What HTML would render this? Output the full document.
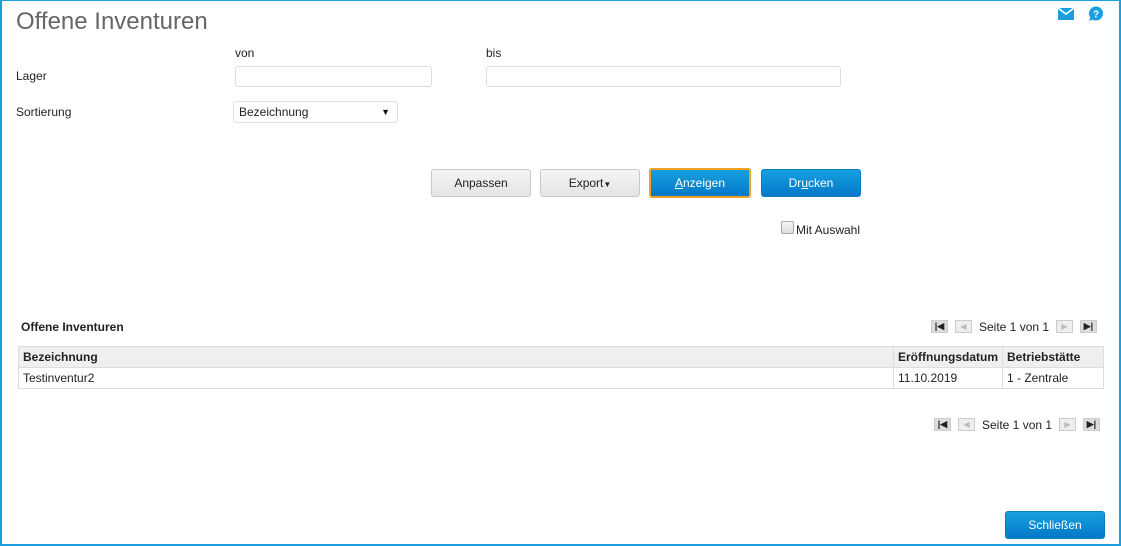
<!DOCTYPE html>
<html><head><meta charset="utf-8"><style>
*{box-sizing:border-box;margin:0;padding:0}
body{width:1121px;height:546px;background:#fff;font-family:"Liberation Sans",Arial,sans-serif;font-size:12px;color:#222;position:relative;overflow:hidden}
.frame{position:absolute;left:0;top:0;width:1121px;height:546px;border:2px solid #1a9ee0;border-top-width:1px;border-left-width:2px}
.a{position:absolute;white-space:nowrap}
.inp{position:absolute;border:1px solid #ddd;border-radius:3px;background:#fff;height:21px}
.btn{position:absolute;height:28px;border-radius:3px;text-align:center;line-height:26px;font-size:12px}
.g{background:linear-gradient(#f4f4f4,#e4e4e4);border:1px solid #c8c8c8;color:#222}
.b{background:linear-gradient(#16a0e0,#0478c8);border:1px solid #0a7cc8;color:#fff}
.pg{position:absolute;width:17px;height:13px;background:#ddd;border:1px solid #ccc}
table{position:absolute;left:18px;top:346px;width:1086px;border-collapse:collapse}
td,th{border:1px solid #ddd;height:21px;padding:0 4px;text-align:left;font-size:12px}
th{background:#efefef;font-weight:bold;color:#222}
</style></head><body>
<div class="frame"></div>
<div class="a" style="left:16px;top:8px;font-size:24px;color:#666">Offene Inventuren</div>
<svg class="a" style="left:1058px;top:8px" width="16" height="12" viewBox="0 0 16 12"><rect width="16" height="12" fill="#1a9ee0"/><path d="M0 0 L8 6 L16 0" stroke="#fff" stroke-width="1.6" fill="none"/></svg>
<svg class="a" style="left:1087px;top:6px" width="17" height="16" viewBox="0 0 17 16"><circle cx="9" cy="7.5" r="7" fill="#1a9ee0"/><path d="M2 15 L4 10 L7 13 Z" fill="#1a9ee0"/><text x="9" y="11.5" font-size="10" font-weight="bold" fill="#fff" text-anchor="middle" font-family="Liberation Sans">?</text></svg>
<div class="a" style="left:235px;top:46px">von</div>
<div class="a" style="left:486px;top:46px">bis</div>
<div class="a" style="left:16px;top:69px">Lager</div>
<div class="inp" style="left:235px;top:66px;width:197px"></div>
<div class="inp" style="left:486px;top:66px;width:355px"></div>
<div class="a" style="left:16px;top:105px">Sortierung</div>
<div class="inp" style="left:233px;top:101px;width:165px;height:22px"><span class="a" style="left:5px;top:3px">Bezeichnung</span><span class="a" style="right:7px;top:5px;font-size:9px;color:#111">▼</span></div>
<div class="btn g" style="left:431px;top:169px;width:100px">Anpassen</div>
<div class="btn g" style="left:540px;top:169px;width:100px">Export<span style="font-size:8px">▼</span></div>
<div class="btn b" style="left:649px;top:168px;width:102px;height:30px;border:2px solid #f0a020"><u>A</u>nzeigen</div>
<div class="btn b" style="left:761px;top:169px;width:100px">Dr<u>u</u>cken</div>
<div class="a" style="left:781px;top:221px;width:13px;height:13px;border:1px solid #aaa;border-radius:2px;background:linear-gradient(#f4f4f4,#ddd)"></div>
<div class="a" style="left:796px;top:223px">Mit Auswahl</div>
<div class="a" style="left:21px;top:320px;font-weight:bold">Offene Inventuren</div>
<div class="pg" style="left:931px;top:320px;font-size:9px;line-height:11px;text-align:center;font-weight:bold">|◀</div>
<div class="pg" style="left:955px;top:320px;background:#eee;color:#bbb;font-size:8px;line-height:11px;text-align:center">◀</div>
<div class="a" style="left:979px;top:320px">Seite 1 von 1</div>
<div class="pg" style="left:1056px;top:320px;background:#eee;color:#bbb;font-size:8px;line-height:11px;text-align:center">▶</div>
<div class="pg" style="left:1080px;top:320px;font-size:9px;line-height:11px;text-align:center;font-weight:bold">▶|</div>
<table><tr><th>Bezeichnung</th><th style="width:106px">Eröffnungsdatum</th><th style="width:101px">Betriebstätte</th></tr>
<tr><td>Testinventur2</td><td>11.10.2019</td><td>1 - Zentrale</td></tr></table>
<div class="pg" style="left:934px;top:418px;font-size:9px;line-height:11px;text-align:center;font-weight:bold">|◀</div>
<div class="pg" style="left:958px;top:418px;background:#eee;color:#bbb;font-size:8px;line-height:11px;text-align:center">◀</div>
<div class="a" style="left:982px;top:418px">Seite 1 von 1</div>
<div class="pg" style="left:1059px;top:418px;background:#eee;color:#bbb;font-size:8px;line-height:11px;text-align:center">▶</div>
<div class="pg" style="left:1083px;top:418px;font-size:9px;line-height:11px;text-align:center;font-weight:bold">▶|</div>
<div class="btn b" style="left:1005px;top:511px;width:100px">Schließen</div>
</body></html>
